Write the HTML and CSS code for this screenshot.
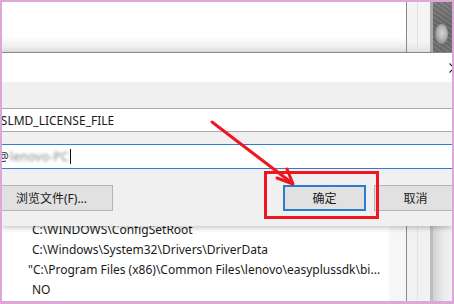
FILE: index.html
```html
<!DOCTYPE html>
<html lang="zh-CN">
<head>
<meta charset="utf-8">
<title>编辑环境变量</title>
<link rel="stylesheet" href="styles.css">
</head>
<body>
<div class="frame">
  <div class="bgtop">
    <div class="bgtop-main"></div>
    <div class="bgtop-scroll"><span class="sub"></span></div>
    <div class="bgtop-edge"></div>
    <div class="bgtop-desk"><span class="knob"></span></div>
  </div>

  <div class="dialog">
    <div class="titlebar">
      <svg class="close" width="10" height="10" viewBox="0 0 10 10"><path d="M0.5 0.5 L9.5 9.5 M9.5 0.5 L0.5 9.5" stroke="#222" stroke-width="1.1" fill="none"/></svg>
    </div>
    <div class="dbody">
      <div class="field">YSLMD_LICENSE_FILE</div>
      <div class="field focused"><span class="at">@</span><span class="blur">lenovo-PC</span><span class="caret"></span></div>
      <div class="buttons">
        <button class="btn browse">浏览文件(F)...</button>
        <button class="btn ok">确定</button>
        <button class="btn">取消</button>
      </div>
    </div>
  </div>

  <div class="bglist">
    <ul class="values">
      <li>C:\WINDOWS\ConfigSetRoot</li>
      <li>C:\Windows\System32\Drivers\DriverData</li>
      <li class="hang">"C:\Program Files (x86)\Common Files\lenovo\easyplussdk\bi...</li>
      <li>NO</li>
    </ul>
    <div class="lcol pale"></div>
    <div class="lcol scroll"><span class="sub"></span></div>
    <div class="lcol edge"></div>
    <div class="lcol desk"></div>
  </div>

  <svg class="annot" width="454" height="304" viewBox="0 0 454 304">
    <rect x="265.5" y="172.5" width="112" height="45" fill="none" stroke="#ee1620" stroke-width="3"/>
    <path d="M212 122 L292 183" stroke="#ee1620" stroke-width="3" fill="none" stroke-linecap="round"/>
    <path d="M277 178 L293 184 L287 169" stroke="#ee1620" stroke-width="3" fill="none" stroke-linecap="round" stroke-linejoin="round"/>
  </svg>
</div>
</body>
</html>
```

FILE: styles.css
```css
* { box-sizing: border-box; }

html, body {
  margin: 0;
  padding: 0;
}

body {
  width: 454px;
  height: 304px;
  background: #dca8d9;
  padding: 2px 2px 3px 2px;
  font-family: "Noto Sans", "Noto Sans CJK SC", sans-serif;
  font-size: 12px;
  color: #1a1a1a;
}

.frame {
  position: relative;
  width: 450px;
  height: 299px;
  overflow: hidden;
  background: #fff;
  display: flex;
  flex-direction: column;
}

/* background window (top) */
.bgtop {
  display: flex;
  height: 51px;
  flex: none;
  border-bottom: 1px solid #8e8e8e;
}
.bgtop-main {
  width: 404px;
  background: linear-gradient(to bottom, #fff 0, #fff 68%, #f0f0f0 88%, #dcdcdc 100%);
}
.bgtop-scroll {
  width: 24px;
  border-left: 1px solid #8a8a8a;
  background: linear-gradient(to bottom, #f4f4f4 0, #f4f4f4 80%, #e2e2e2 100%);
  display: flex;
  padding-left: 10px;
}
.bgtop-scroll .sub {
  width: 1px;
  background: #e0e0e0;
}
.bgtop-edge {
  width: 3px;
  background: #a9a9a9;
}
.bgtop-desk {
  flex: 1;
  position: relative;
  background:
    repeating-linear-gradient(35deg, rgba(255,255,255,0.05) 0 2px, rgba(0,0,0,0.07) 2px 4px),
    linear-gradient(to bottom, #7a7a7a 0, #6a6a6a 50%, #727272 100%);
}
.knob {
  position: absolute;
  left: 2px;
  top: 22px;
  width: 13px;
  height: 20px;
  border-radius: 50%;
  background: radial-gradient(ellipse at 55% 45%, #d8d8d8 0, #b4b4b4 40%, #8a8a8a 75%, #6e6e6e 100%);
}

/* dialog */
.dialog {
  position: relative;
  z-index: 1;
  flex: none;
  background: #f0f0f0;
  box-shadow: 0 2px 5px rgba(0, 0, 0, 0.22);
}
.titlebar {
  height: 29px;
  background: #fff;
  display: flex;
  justify-content: flex-end;
  align-items: flex-start;
  padding-top: 10px;
}
.close {
  margin-right: -7px;
  display: block;
}
.dbody {
  height: 144px;
  padding: 26px 0 15px;
  display: flex;
  flex-direction: column;
}
.field {
  margin: 0 -10px;
  height: 24px;
  background: #fff;
  border: 1px solid #a8a8a8;
  padding-left: 1px;
  display: flex;
  align-items: center;
  white-space: nowrap;
  font-size: 12px;
}
.field.focused {
  margin-top: 12px;
  height: 25px;
  border-color: #2f7fcf;
  padding-left: 5px;
}
.at { color: #333; }
.blur {
  color: #888;
  filter: blur(1.4px);
  margin-left: 1px;
  letter-spacing: 0.3px;
}
.caret {
  width: 1px;
  height: 15px;
  background: #111;
  margin-left: 1px;
}

.buttons {
  margin: 16px -5px 0 -12px;
  display: flex;
  gap: 8px;
  height: 26px;
}
.btn {
  font: inherit;
  font-size: 12px;
  color: #1a1a1a;
  width: 83px;
  height: 26px;
  padding: 0;
  background: #e1e1e1;
  border: 1px solid #b4b4b4;
}
.btn.browse {
  width: 123px;
  margin-right: auto;
}
.btn.ok {
  border: 2px solid #2a7ccc;
}

/* background list (bottom) */
.bglist {
  flex: 1;
  margin-top: -10px;
  display: flex;
}
.values {
  list-style: none;
  margin: 0;
  padding: 4px 0 0 30px;
  width: 387px;
  white-space: nowrap;
  overflow: hidden;
}
.values li {
  height: 20px;
  line-height: 20px;
  font-size: 12px;
}
.values li.hang {
  text-indent: -4px;
}
.lcol.pale {
  width: 17px;
  background: #f6f6f6;
}
.lcol.scroll {
  width: 24px;
  border-left: 1px solid #8a8a8a;
  background: #f1f1f1;
  display: flex;
  padding-left: 10px;
}
.lcol.scroll .sub {
  width: 1px;
  background: #e2e2e2;
}
.lcol.edge {
  width: 3px;
  background: #bdbdbd;
}
.lcol.desk {
  flex: 1;
  background: linear-gradient(to right, #d2d2d2, #ececec 60%, #f2f2f2);
}

.annot {
  position: absolute;
  left: -2px;
  top: -2px;
  z-index: 5;
  pointer-events: none;
}
```
